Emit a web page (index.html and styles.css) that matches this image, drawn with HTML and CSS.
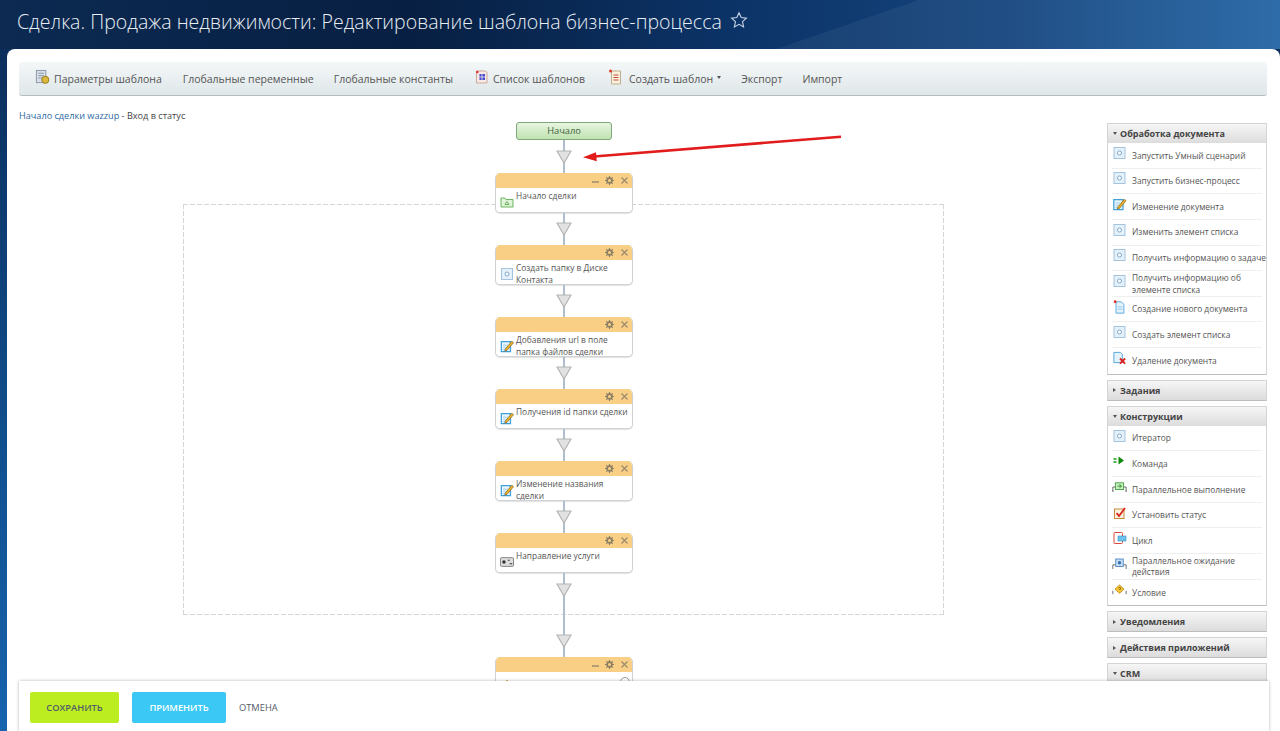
FILE: index.html
```html
<!DOCTYPE html>
<html lang="ru">
<head>
<meta charset="utf-8">
<title>Редактирование шаблона бизнес-процесса</title>
<link rel="stylesheet" href="styles.css">
</head>
<body>
<svg class="defs" width="0" height="0" aria-hidden="true">
  <symbol id="i-robot" viewBox="0 0 14 14"><rect x="1.500" y="1.500" width="11" height="11" fill="#e4f0fa" stroke="#a3c3de"/><circle cx="7" cy="7" r="2" fill="#fff" stroke="#7fa8cc"/></symbol>
  <symbol id="i-edit" viewBox="0 0 16 16"><path d="M1.500 3h10.500v11.500H1.500z" fill="#e8f5fd" stroke="#3d9ed9" stroke-width="1.400"/><path d="M3.500 7h5M3.500 9.500h4M3.500 12h3" stroke="#9ccde9"/><path d="M6 11.500l7.500-9 2 1.700-7.500 8.800-2.500.8z" fill="#e9b02c" stroke="#7a5a12" stroke-width=".7"/></symbol>
  <symbol id="i-folder" viewBox="0 0 14 14"><path d="M1 3h4l1 1.500h7V12H1z" fill="#dff3d8" stroke="#6cb55e"/><path d="M7 6.500l2 3H5z" fill="none" stroke="#6cb55e"/></symbol>
  <symbol id="i-switch" viewBox="0 0 16 12"><rect x=".5" y="1" width="15" height="10" rx="1.500" fill="#ddd" stroke="#777"/><circle cx="4.500" cy="6" r="2" fill="#333"/><path d="M9 4h2M11 8h3" stroke="#333" stroke-width="1.300"/></symbol>
  <symbol id="i-newdoc" viewBox="0 0 14 16"><path d="M3 2h6l3 3v10H3z" fill="#e4f2fb" stroke="#4aa3dc"/><path d="M5 8h5M5 10.500h5" stroke="#8cc4e6"/><circle cx="2" cy="2" r="1.600" fill="#e4342c"/></symbol>
  <symbol id="i-deldoc" viewBox="0 0 15 15"><path d="M1.500 1.500h7l2 2v9h-9z" fill="#e4f2fb" stroke="#4aa3dc"/><path d="M8 8l5.500 5.500M13.500 8L8 13.500" stroke="#d8201c" stroke-width="2"/></symbol>
  <symbol id="i-command" viewBox="0 0 14 14"><path d="M1 5h3M1 8h3" stroke="#1b9a1b" stroke-width="1.400"/><path d="M6 2.500l5.500 4-5.500 4z" fill="#0d8a0d"/></symbol>
  <symbol id="i-parallel" viewBox="0 0 18 14"><rect x="4" y="2" width="10" height="8" fill="#cdeec5" stroke="#2f9a2f"/><path d="M6.500 6h4M9 4l2.500 2L9 8" stroke="#0d7d0d" fill="none"/><path d="M1 12V7h3M17 12V7h-3M0 12h2M16 12h2" stroke="#555" fill="none"/></symbol>
  <symbol id="i-status" viewBox="0 0 14 14"><rect x="2" y="3" width="9.500" height="9.500" fill="#fdf3e0" stroke="#c88a3a"/><path d="M4 7l2.500 3L12.500 2" stroke="#d8261f" stroke-width="1.800" fill="none"/></symbol>
  <symbol id="i-loop" viewBox="0 0 15 14"><rect x="2" y="1.500" width="8.500" height="11" rx="1" fill="#fff" stroke="#e0483d"/><rect x="6" y="5" width="8" height="5" fill="#6ec1ea" stroke="#3b8fc2" stroke-width=".6"/></symbol>
  <symbol id="i-pwait" viewBox="0 0 18 14"><rect x="4.500" y="1" width="9" height="9" fill="#c9def3" stroke="#3e7dc0"/><circle cx="9" cy="5.500" r="2" fill="#2f6fb5"/><path d="M1 13V8h3M17 13V8h-3" stroke="#555" fill="none"/></symbol>
  <symbol id="i-cond" viewBox="0 0 18 14"><path d="M9 1l5.500 5L9 11 3.500 6z" fill="#f7c63a" stroke="#b98a14"/><path d="M7.800 4.800c.6-1.200 2.600-1 2.600.3 0 .9-1.300 1-1.300 2" stroke="#5b4306" fill="none"/><path d="M1 12V8M17 12V8" stroke="#555"/></symbol>
  <symbol id="i-params" viewBox="0 0 16 16"><rect x="1.500" y="1" width="10" height="13" fill="#d9dfe8" stroke="#8a95a6"/><path d="M3.500 4h6M3.500 6.500h6M3.500 9h4" stroke="#8a95a6"/><circle cx="11" cy="11" r="3.800" fill="#dcb83c" stroke="#94791c"/></symbol>
  <symbol id="i-list" viewBox="0 0 14 16"><path d="M2 2h9l1.500 1.500V14H2z" fill="#f9e9e4" stroke="#c9a79c"/><rect x="5" y="5" width="5.500" height="6" fill="#4b4bc8"/><path d="M5 8h5.500M7.500 5v6" stroke="#fff" stroke-width=".7"/><circle cx="2.800" cy="3" r="1.300" fill="#e4342c"/></symbol>
  <symbol id="i-create" viewBox="0 0 14 16"><path d="M3 2h9v13H3z" fill="#fbf2dd" stroke="#bfae8c"/><path d="M5 6h5M5 8.500h5M5 11h5" stroke="#c84a3c" stroke-width="1.100"/><circle cx="2" cy="2" r="1.500" fill="#e4342c"/></symbol>
  <symbol id="i-tri" viewBox="0 0 16 14"><path d="M1 1h14L8 13z" fill="#e2e2e2" stroke="#b4b4b4" stroke-width="1.200"/></symbol>
  <symbol id="i-min" viewBox="0 0 9 9"><path d="M1 6h7" stroke="#9c8d6e" stroke-width="1.300"/></symbol>
  <symbol id="i-gear" viewBox="0 0 9 9"><circle cx="4.500" cy="4.500" r="2.400" fill="none" stroke="#8a7d63" stroke-width="1.700"/><path d="M4.500 0v2M4.500 7v2M0 4.500h2M7 4.500h2M1.300 1.300l1.200 1.200M6.500 6.500l1.200 1.200M7.700 1.300L6.500 2.500M2.500 6.500L1.300 7.700" stroke="#8a7d63" stroke-width="1.100"/></symbol>
  <symbol id="i-close" viewBox="0 0 9 9"><path d="M1.500 1.500l6 6M7.500 1.500l-6 6" stroke="#9c8d6e" stroke-width="1.300"/></symbol>
</svg>

<header class="page-head">
  <h1 class="page-title">Сделка. Продажа недвижимости: Редактирование шаблона бизнес-процесса</h1>
  <svg class="star" viewBox="0 0 18 18"><path d="M9 1.800l2.200 4.800 5.200.6-3.900 3.500 1.100 5.200L9 13.300l-4.600 2.600 1.100-5.200-3.900-3.500 5.200-.6z" fill="none" stroke="#c6d3e2" stroke-width="1.100"/></svg>
</header>

<main class="panel">
  <nav class="toolbar">
    <a class="tool tool-first"><svg class="tool-ic"><use href="#i-params"/></svg>Параметры шаблона</a>
    <a class="tool">Глобальные переменные</a>
    <a class="tool">Глобальные константы</a>
    <a class="tool tool-list"><svg class="tool-ic"><use href="#i-list"/></svg>Список шаблонов</a>
    <a class="tool tool-create"><svg class="tool-ic tool-ic-wide"><use href="#i-create"/></svg>Создать шаблон<span class="caret"></span></a>
    <a class="tool">Экспорт</a>
    <a class="tool">Импорт</a>
  </nav>

  <div class="crumbs"><a class="crumb-link">Начало сделки wazzup</a> - Вход в статус</div>

  <div class="workspace">
    <section class="canvas">
      <div class="dashed"></div>
      <div class="start">Начало</div>
      <div class="conn conn-first"><svg class="tri"><use href="#i-tri"/></svg></div>

      <article class="node">
        <div class="node-head"><svg class="ctl"><use href="#i-min"/></svg><svg class="ctl"><use href="#i-gear"/></svg><svg class="ctl"><use href="#i-close"/></svg></div>
        <div class="node-body"><svg class="node-ic"><use href="#i-folder"/></svg><span>Начало сделки</span></div>
      </article>
      <div class="conn"><svg class="tri"><use href="#i-tri"/></svg></div>

      <article class="node">
        <div class="node-head"><svg class="ctl"><use href="#i-gear"/></svg><svg class="ctl"><use href="#i-close"/></svg></div>
        <div class="node-body"><svg class="node-ic"><use href="#i-robot"/></svg><span>Создать папку в Диске Контакта</span></div>
      </article>
      <div class="conn"><svg class="tri"><use href="#i-tri"/></svg></div>

      <article class="node">
        <div class="node-head"><svg class="ctl"><use href="#i-gear"/></svg><svg class="ctl"><use href="#i-close"/></svg></div>
        <div class="node-body"><svg class="node-ic"><use href="#i-edit"/></svg><span>Добавления url в поле папка файлов сделки</span></div>
      </article>
      <div class="conn"><svg class="tri"><use href="#i-tri"/></svg></div>

      <article class="node">
        <div class="node-head"><svg class="ctl"><use href="#i-gear"/></svg><svg class="ctl"><use href="#i-close"/></svg></div>
        <div class="node-body"><svg class="node-ic"><use href="#i-edit"/></svg><span>Получения id папки сделки</span></div>
      </article>
      <div class="conn"><svg class="tri"><use href="#i-tri"/></svg></div>

      <article class="node">
        <div class="node-head"><svg class="ctl"><use href="#i-gear"/></svg><svg class="ctl"><use href="#i-close"/></svg></div>
        <div class="node-body"><svg class="node-ic"><use href="#i-edit"/></svg><span>Изменение названия сделки</span></div>
      </article>
      <div class="conn"><svg class="tri"><use href="#i-tri"/></svg></div>

      <article class="node">
        <div class="node-head"><svg class="ctl"><use href="#i-gear"/></svg><svg class="ctl"><use href="#i-close"/></svg></div>
        <div class="node-body"><svg class="node-ic"><use href="#i-switch"/></svg><span>Направление услуги</span></div>
      </article>
      <div class="conn conn-long"><svg class="tri"><use href="#i-tri"/></svg><svg class="tri"><use href="#i-tri"/></svg></div>

      <article class="node">
        <div class="node-head"><svg class="ctl"><use href="#i-min"/></svg><svg class="ctl"><use href="#i-gear"/></svg><svg class="ctl"><use href="#i-close"/></svg></div>
        <div class="node-body node-body-low"><svg class="node-ic node-ic-low"><use href="#i-cond"/></svg><span>Условие</span></div>
        <span class="node-info"></span>
      </article>

      <svg class="arrow" viewBox="0 0 262 30"><path d="M259 2.700L12 22.500" stroke="#e21c1c" stroke-width="2.600" fill="none"/><path d="M1 23.200l13-5 .8 9z" fill="#e21c1c"/></svg>
    </section>

    <aside class="side">
      <section class="group">
        <h2 class="group-head"><span class="open"></span>Обработка документа</h2>
        <ul class="items">
          <li class="item"><svg class="item-ic"><use href="#i-robot"/></svg><span>Запустить Умный сценарий</span></li>
          <li class="item"><svg class="item-ic"><use href="#i-robot"/></svg><span>Запустить бизнес-процесс</span></li>
          <li class="item"><svg class="item-ic"><use href="#i-edit"/></svg><span>Изменение документа</span></li>
          <li class="item"><svg class="item-ic"><use href="#i-robot"/></svg><span>Изменить элемент списка</span></li>
          <li class="item"><svg class="item-ic"><use href="#i-robot"/></svg><span>Получить информацию о задаче</span></li>
          <li class="item"><svg class="item-ic"><use href="#i-robot"/></svg><span>Получить информацию об элементе списка</span></li>
          <li class="item"><svg class="item-ic"><use href="#i-newdoc"/></svg><span>Создание нового документа</span></li>
          <li class="item"><svg class="item-ic"><use href="#i-robot"/></svg><span>Создать элемент списка</span></li>
          <li class="item"><svg class="item-ic"><use href="#i-deldoc"/></svg><span>Удаление документа</span></li>
        </ul>
      </section>
      <section class="group"><h2 class="group-head"><span class="shut"></span>Задания</h2></section>
      <section class="group">
        <h2 class="group-head"><span class="open"></span>Конструкции</h2>
        <ul class="items">
          <li class="item"><svg class="item-ic"><use href="#i-robot"/></svg><span>Итератор</span></li>
          <li class="item"><svg class="item-ic"><use href="#i-command"/></svg><span>Команда</span></li>
          <li class="item"><svg class="item-ic"><use href="#i-parallel"/></svg><span>Параллельное выполнение</span></li>
          <li class="item"><svg class="item-ic"><use href="#i-status"/></svg><span>Установить статус</span></li>
          <li class="item"><svg class="item-ic"><use href="#i-loop"/></svg><span>Цикл</span></li>
          <li class="item"><svg class="item-ic"><use href="#i-pwait"/></svg><span>Параллельное ожидание действия</span></li>
          <li class="item"><svg class="item-ic"><use href="#i-cond"/></svg><span>Условие</span></li>
        </ul>
      </section>
      <section class="group"><h2 class="group-head"><span class="shut"></span>Уведомления</h2></section>
      <section class="group"><h2 class="group-head"><span class="shut"></span>Действия приложений</h2></section>
      <section class="group"><h2 class="group-head"><span class="open"></span>CRM</h2></section>
    </aside>
  </div>

  <footer class="savebar">
    <button class="btn btn-save">СОХРАНИТЬ</button>
    <button class="btn btn-apply">ПРИМЕНИТЬ</button>
    <a class="cancel">ОТМЕНА</a>
  </footer>
</main>
</body>
</html>
```

FILE: styles.css
```css
* { box-sizing: border-box; }
html, body { margin: 0; height: 100%; }
body {
  height: 731px;
  overflow: hidden;
  display: flex;
  flex-direction: column;
  font-family: "Open Sans", "Liberation Sans", sans-serif;
  color: #555;
  background: linear-gradient(180deg, #0a2a55 0, #0c3364 110px, #11508f 450px, #1763ae 100%);
}
.defs { display: block; height: 0; }
.page-head {
  height: 49px;
  flex: none;
  display: flex;
  align-items: center;
  gap: 8px;
  padding: 0 0 7px 17px;
  background:
    linear-gradient(161deg, transparent 64.6%, rgba(255,255,255,.05) 64.6%),
    linear-gradient(90deg, #0c2a52 0, #071f42 32%, #0c3468 58%, #14447d 78%, #2364a4 100%);
}
.page-title {
  margin: 0;
  font-size: 19.55px;
  font-weight: 300;
  color: #e8eef5;
  white-space: nowrap;
}
.star { width: 18px; height: 18px; margin-top: -2px; }

.panel {
  flex: 1;
  min-height: 0;
  margin-left: 7px;
  padding: 13px 13px 0 12px;
  background: #fff;
  border-radius: 8px 8px 0 0;
  position: relative;
  overflow: hidden;
}
.toolbar {
  height: 34px;
  display: flex;
  align-items: center;
  gap: 20px;
  padding: 0 0 0 16px;
  font-size: 10.5px;
  color: #555;
  background: linear-gradient(180deg, #f4f7f8 0, #dfe7e9 100%);
  border-bottom: 1px solid #b4bdc1;
  border-radius: 3px;
}
.tool { display: flex; align-items: center; white-space: nowrap; }
.tool-first { margin-right: 1px; }
.tool-list { margin-left: 1px; }
.tool-create { margin-left: 3px; }
.tool-ic { width: 15px; height: 16px; margin-right: 4px; margin-top: -3px; }
.tool-ic-wide { margin-right: 6px; }
.caret {
  width: 0; height: 0; margin-left: 4px; margin-top: -2px;
  border: 2.5px solid transparent; border-top: 3px solid #555; border-bottom: 0;
}
.crumbs {
  margin-top: 14px;
  height: 12px;
  line-height: 12px;
  font-size: 9.15px;
  color: #444;
}
.crumb-link { color: #2d6aa3; }

.workspace { display: flex; align-items: flex-start; }
.canvas {
  flex: 1;
  position: relative;
  display: flex;
  flex-direction: column;
  align-items: center;
  padding-left: 2px;
}
.dashed {
  position: absolute;
  left: 164px;
  top: 82px;
  width: 761px;
  height: 411px;
  background-image:
    repeating-linear-gradient(90deg, #d6d6d6 0 5px, transparent 5px 7px),
    repeating-linear-gradient(90deg, #d6d6d6 0 5px, transparent 5px 7px),
    repeating-linear-gradient(180deg, #d6d6d6 0 5px, transparent 5px 7px),
    repeating-linear-gradient(180deg, #d6d6d6 0 5px, transparent 5px 7px);
  background-size: 100% 1px, 100% 1px, 1px 100%, 1px 100%;
  background-position: 0 0, 0 100%, 0 0, 100% 0;
  background-repeat: no-repeat;
}
.start {
  position: relative;
  width: 96px;
  height: 18px;
  line-height: 16px;
  text-align: center;
  font-size: 9.3px;
  color: #44603c;
  background: linear-gradient(180deg, #e6f5df 0, #bfe3b1 100%);
  border: 1px solid #7ea678;
  border-radius: 3px;
}
.conn {
  position: relative;
  width: 16px;
  height: 32px;
  display: flex;
  align-items: center;
  justify-content: center;
  background: linear-gradient(#b0bdcd, #b0bdcd) center / 2px 100% no-repeat;
}
.conn-first { height: 33px; }
.conn-long {
  height: 84px;
  flex-direction: column;
  justify-content: space-between;
  padding: 10px 0 9px;
}
.tri { display: block; width: 16px; height: 14px; flex: none; }
.node {
  position: relative;
  width: 138px;
  height: 40px;
  flex: none;
  background: #fff;
  border: 1px solid #d0d3d6;
  border-top: 0;
  border-radius: 5px;
  box-shadow: 0 1px 1px rgba(0,0,0,.12);
  overflow: hidden;
}
.node-head {
  height: 15px;
  display: flex;
  justify-content: flex-end;
  align-items: center;
  gap: 5.4px;
  padding-right: 3.500px;
  background: #f8cf84;
}
.ctl { width: 9px; height: 9px; }
.node-body {
  display: flex;
  gap: 2px;
  padding: 2px 4px 0 4px;
  font-size: 8.4px;
  line-height: 12px;
  color: #555;
}
.node-body-low { padding-top: 7px; }
.node-ic { width: 14px; height: 14px; flex: none; margin-top: 5px; }
.node-ic-low { margin-top: -1px; }
.node-info {
  position: absolute;
  right: 2px;
  top: 20px;
  width: 10px;
  height: 10px;
  border: 1px solid #999;
  border-radius: 50%;
}

.arrow {
  position: absolute;
  left: 563px;
  top: 12px;
  width: 262px;
  height: 30px;
}

.side { width: 160px; flex: none; display: flex; flex-direction: column; gap: 5px; margin-top: 1px; }
.group { border: 1px solid #d4d4d4; border-bottom-color: #bdbdbd; background: #fff; }
.group-head {
  margin: 0;
  height: 19px;
  display: flex;
  align-items: center;
  gap: 3px;
  padding-left: 5px;
  font-size: 9px;
  font-weight: 700;
  color: #444;
  background: linear-gradient(180deg, #f6f6f6 0, #dcdcdc 100%);
}
.open {
  width: 0; height: 0;
  border: 2.5px solid transparent; border-top: 3px solid #555; border-bottom: 0;
}
.shut {
  width: 0; height: 0; margin-right: 1px;
  border: 2.5px solid transparent; border-left: 3px solid #555; border-right: 0;
}
.items { list-style: none; margin: 0; padding: 0 4px; }
.item {
  height: 25.65px;
  display: flex;
  align-items: center;
  gap: 5px;
  font-size: 8.4px;
  line-height: 11.5px;
  color: #555;
  border-bottom: 1px solid #efefef;
}
.item:last-child { border-bottom: 0; }
.item-ic { width: 15px; height: 14px; flex: none; margin-top: -5px; }
.item span { flex: 1; margin-right: -6px; }

.savebar {
  position: absolute;
  left: 12px;
  right: 11px;
  bottom: 0;
  height: 50px;
  display: flex;
  align-items: center;
  padding: 11px 0 8px 11px;
  background: #fff;
  box-shadow: 0 0 3px rgba(0,0,0,.3);
}
.btn {
  height: 31px;
  border: 0;
  border-radius: 2px;
  font-family: inherit;
  font-size: 9.3px;
  font-weight: 600;
}
.btn-save { width: 89px; background: #bbed21; color: #535c69; margin-right: 13px; }
.btn-apply { width: 94px; background: #3bc8f5; color: #fff; margin-right: 13px; }
.cancel { font-size: 9.3px; color: #535c69; }
```
